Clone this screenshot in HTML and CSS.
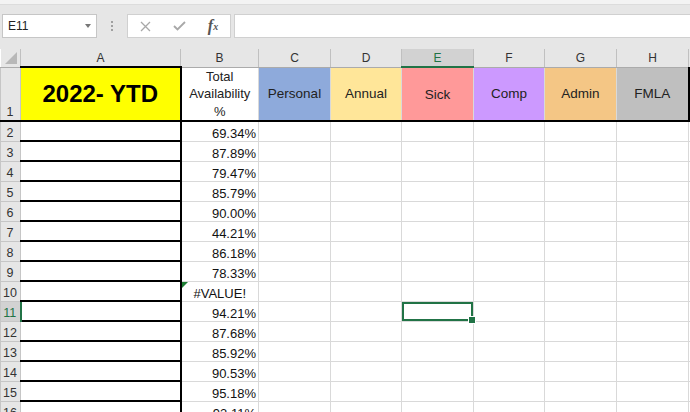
FILE: index.html
```html
<!DOCTYPE html>
<html lang="en">

<head>
  <meta charset="UTF-8" />
  <meta name="viewport" content="width=device-width, initial-scale=1.0" />
  <title>Availability 2022 | Excel</title>
  <link rel="stylesheet" href="styles.css">
</head>

<body>
  <div class="title-strip"></div>

  <div class="formula-bar">
    <div class="name-box">
      <span>E11</span>
      <span class="caret"></span>
    </div>
    <div class="grip"><i></i><i></i><i></i></div>
    <div class="fx-buttons">
      <span class="fx-btn">
        <svg width="11" height="11" viewBox="0 0 11 11"><path d="M1 1 L10 10 M10 1 L1 10" stroke="#a8a8a8" stroke-width="1.3" fill="none" /></svg>
      </span>
      <span class="fx-btn">
        <svg width="13" height="10" viewBox="0 0 13 10"><path d="M1 5 L4.5 8.5 L12 1" stroke="#a8a8a8" stroke-width="1.8" fill="none" /></svg>
      </span>
      <span class="fx-btn fx"><i>f</i><sub>x</sub></span>
    </div>
    <div class="formula-input"></div>
  </div>

  <table class="sheet">
    <colgroup>
      <col class="w-head">
      <col class="w-a">
      <col class="w-b">
      <col class="w-c">
      <col class="w-d">
      <col class="w-e">
      <col class="w-f">
      <col class="w-g">
      <col class="w-h">
      <col class="w-i">
    </colgroup>
    <thead>
      <tr>
        <th class="corner"></th>
        <th>A</th>
        <th>B</th>
        <th>C</th>
        <th>D</th>
        <th class="active-col">E</th>
        <th>F</th>
        <th>G</th>
        <th>H</th>
        <th></th>
      </tr>
    </thead>
    <tbody>
      <tr class="row-top">
        <td class="rh rh-bottom">1</td>
        <td class="col-a ytd">2022- YTD</td>
        <td class="avail">Total<br>Availability<br>%</td>
        <td class="cat personal">Personal</td>
        <td class="cat annual">Annual</td>
        <td class="cat sick">Sick</td>
        <td class="cat comp">Comp</td>
        <td class="cat admin">Admin</td>
        <td class="cat fmla">FMLA</td>
        <td></td>
      </tr>
      <tr><td class="rh">2</td><td class="col-a"></td><td class="num">69.34%</td><td></td><td></td><td></td><td></td><td></td><td></td><td></td></tr>
      <tr><td class="rh">3</td><td class="col-a"></td><td class="num">87.89%</td><td></td><td></td><td></td><td></td><td></td><td></td><td></td></tr>
      <tr><td class="rh">4</td><td class="col-a"></td><td class="num">79.47%</td><td></td><td></td><td></td><td></td><td></td><td></td><td></td></tr>
      <tr><td class="rh">5</td><td class="col-a"></td><td class="num">85.79%</td><td></td><td></td><td></td><td></td><td></td><td></td><td></td></tr>
      <tr><td class="rh">6</td><td class="col-a"></td><td class="num">90.00%</td><td></td><td></td><td></td><td></td><td></td><td></td><td></td></tr>
      <tr><td class="rh">7</td><td class="col-a"></td><td class="num">44.21%</td><td></td><td></td><td></td><td></td><td></td><td></td><td></td></tr>
      <tr><td class="rh">8</td><td class="col-a"></td><td class="num">86.18%</td><td></td><td></td><td></td><td></td><td></td><td></td><td></td></tr>
      <tr><td class="rh">9</td><td class="col-a"></td><td class="num">78.33%</td><td></td><td></td><td></td><td></td><td></td><td></td><td></td></tr>
      <tr><td class="rh">10</td><td class="col-a"></td><td class="error">#VALUE!</td><td></td><td></td><td></td><td></td><td></td><td></td><td></td></tr>
      <tr><td class="rh active-row">11</td><td class="col-a"></td><td class="num">94.21%</td><td></td><td></td><td class="selected"></td><td></td><td></td><td></td><td></td></tr>
      <tr><td class="rh">12</td><td class="col-a"></td><td class="num">87.68%</td><td></td><td></td><td></td><td></td><td></td><td></td><td></td></tr>
      <tr><td class="rh">13</td><td class="col-a"></td><td class="num">85.92%</td><td></td><td></td><td></td><td></td><td></td><td></td><td></td></tr>
      <tr><td class="rh">14</td><td class="col-a"></td><td class="num">90.53%</td><td></td><td></td><td></td><td></td><td></td><td></td><td></td></tr>
      <tr><td class="rh">15</td><td class="col-a"></td><td class="num">95.18%</td><td></td><td></td><td></td><td></td><td></td><td></td><td></td></tr>
      <tr><td class="rh">16</td><td class="col-a"></td><td class="num">93.11%</td><td></td><td></td><td></td><td></td><td></td><td></td><td></td></tr>
    </tbody>
  </table>
</body>

</html>
```

FILE: styles.css
```css
* {
  box-sizing: border-box;
  margin: 0;
  padding: 0;
}

body {
  background: #e6e6e6;
  font-family: 'Liberation Sans', Arial, sans-serif;
  width: 690px;
  height: 412px;
  overflow: hidden;
}

.title-strip {
  height: 5px;
  background: #f3f3f3;
  border-bottom: 1px solid #dcdcdc;
}

/* formula bar */
.formula-bar {
  display: flex;
  align-items: flex-start;
  height: 44px;
  padding: 9px 0 11px 2px;
}

.name-box {
  width: 95px;
  height: 24px;
  background: #fff;
  border: 1px solid #c6c6c6;
  display: flex;
  align-items: center;
  justify-content: space-between;
  padding: 0 5px 0 5px;
  font-size: 12px;
  color: #222;
}

.caret {
  width: 0;
  height: 0;
  border-left: 3.5px solid transparent;
  border-right: 3.5px solid transparent;
  border-top: 4px solid #777;
}

.grip {
  width: 30px;
  height: 24px;
  display: flex;
  flex-direction: column;
  align-items: center;
  justify-content: center;
  gap: 2px;
}

.grip i {
  width: 2px;
  height: 2px;
  background: #a0a0a0;
}

.fx-buttons {
  width: 104px;
  height: 24px;
  background: #fff;
  border: 1px solid #d0d0d0;
  display: flex;
}

.fx-btn {
  width: 34px;
  display: flex;
  align-items: center;
  justify-content: center;
}

.fx {
  font-family: 'Liberation Serif', 'Times New Roman', serif;
  font-size: 16px;
  font-weight: bold;
  color: #555;
}

.fx sub {
  font-size: 10px;
  font-style: italic;
  vertical-align: -1px;
}

.formula-input {
  flex: 1;
  height: 24px;
  margin-left: 3px;
  background: #fff;
  border: 1px solid #d0d0d0;
  border-right: none;
}

/* grid */
.sheet {
  border-collapse: collapse;
  table-layout: fixed;
  width: 718px;
  background: #fff;
}

.w-head { width: 20px; }
.w-a { width: 160px; }
.w-b { width: 78px; }
.w-c { width: 72px; }
.w-d { width: 71px; }
.w-e { width: 72px; }
.w-f { width: 71px; }
.w-g { width: 72px; }
.w-h { width: 72px; }
.w-i { width: 30px; }

.sheet th {
  height: 18px;
  background: #e6e6e6;
  border-right: 1px solid #c0c0c0;
  border-bottom: 1px solid #ababab;
  font-size: 12px;
  font-weight: normal;
  color: #333;
}

.sheet th.corner {
  position: relative;
}

.sheet th.corner::after {
  content: '';
  position: absolute;
  right: 3px;
  bottom: 3px;
  border-left: 12px solid transparent;
  border-bottom: 12px solid #b8b8b8;
}

.sheet th.active-col {
  background: #d2d2d2;
  color: #217346;
  border-bottom: 2px solid #217346;
}

.sheet td {
  height: 20px;
  border: 1px solid #d9d9d9;
  font-size: 13px;
  color: #111;
  padding: 0 3px;
  white-space: nowrap;
  overflow: hidden;
  vertical-align: bottom;
}

.sheet td.rh {
  background: #e6e6e6;
  border: 1px solid #c6c6c6;
  font-size: 12.5px;
  color: #333;
  padding: 0 1px 1px 0;
  text-align: center;
}

.sheet td.active-row {
  background: #d2d2d2;
  color: #217346;
  border-right: 2px solid #217346;
}

.sheet td.col-a {
  border-top: 2px solid #000;
  border-bottom: 2px solid #000;
  border-right: 2px solid #000;
}

/* header row 1 */
.sheet .row-top td {
  height: 54px;
  border-bottom: 2px solid #000;
  text-align: center;
  vertical-align: middle;
}

.sheet .row-top td.rh-bottom {
  vertical-align: bottom;
}

.sheet .row-top td.ytd {
  background: #ffff00;
  font-size: 24px;
  font-weight: bold;
  color: #000;
}

.sheet .row-top td.avail {
  line-height: 17.5px;
  font-size: 13px;
  color: #222;
}

.sheet .row-top td.cat {
  border-left-color: transparent;
  font-size: 13.5px;
  color: #222;
}

.personal { background: #8eaadb; }
.annual { background: #ffe699; }
.sick { background: #ff9999; }
.comp { background: #cc99ff; }
.admin { background: #f4c685; }

.sheet .row-top td.fmla {
  background: #bfbfbf;
  border-right: 2px solid #000;
}

.sheet td.num {
  text-align: right;
  padding-right: 2px;
}

.sheet td.error {
  position: relative;
  text-align: center;
}

.error::before {
  content: '';
  position: absolute;
  left: 0;
  top: 0;
  border-top: 6px solid #1e7e34;
  border-right: 6px solid transparent;
}

.sheet td.selected {
  position: relative;
  box-shadow: inset 0 0 0 2px #217346;
  overflow: visible;
}

.selected::after {
  content: '';
  position: absolute;
  right: -3px;
  bottom: -3px;
  width: 6px;
  height: 6px;
  background: #217346;
  border: 1px solid #fff;
}
```
